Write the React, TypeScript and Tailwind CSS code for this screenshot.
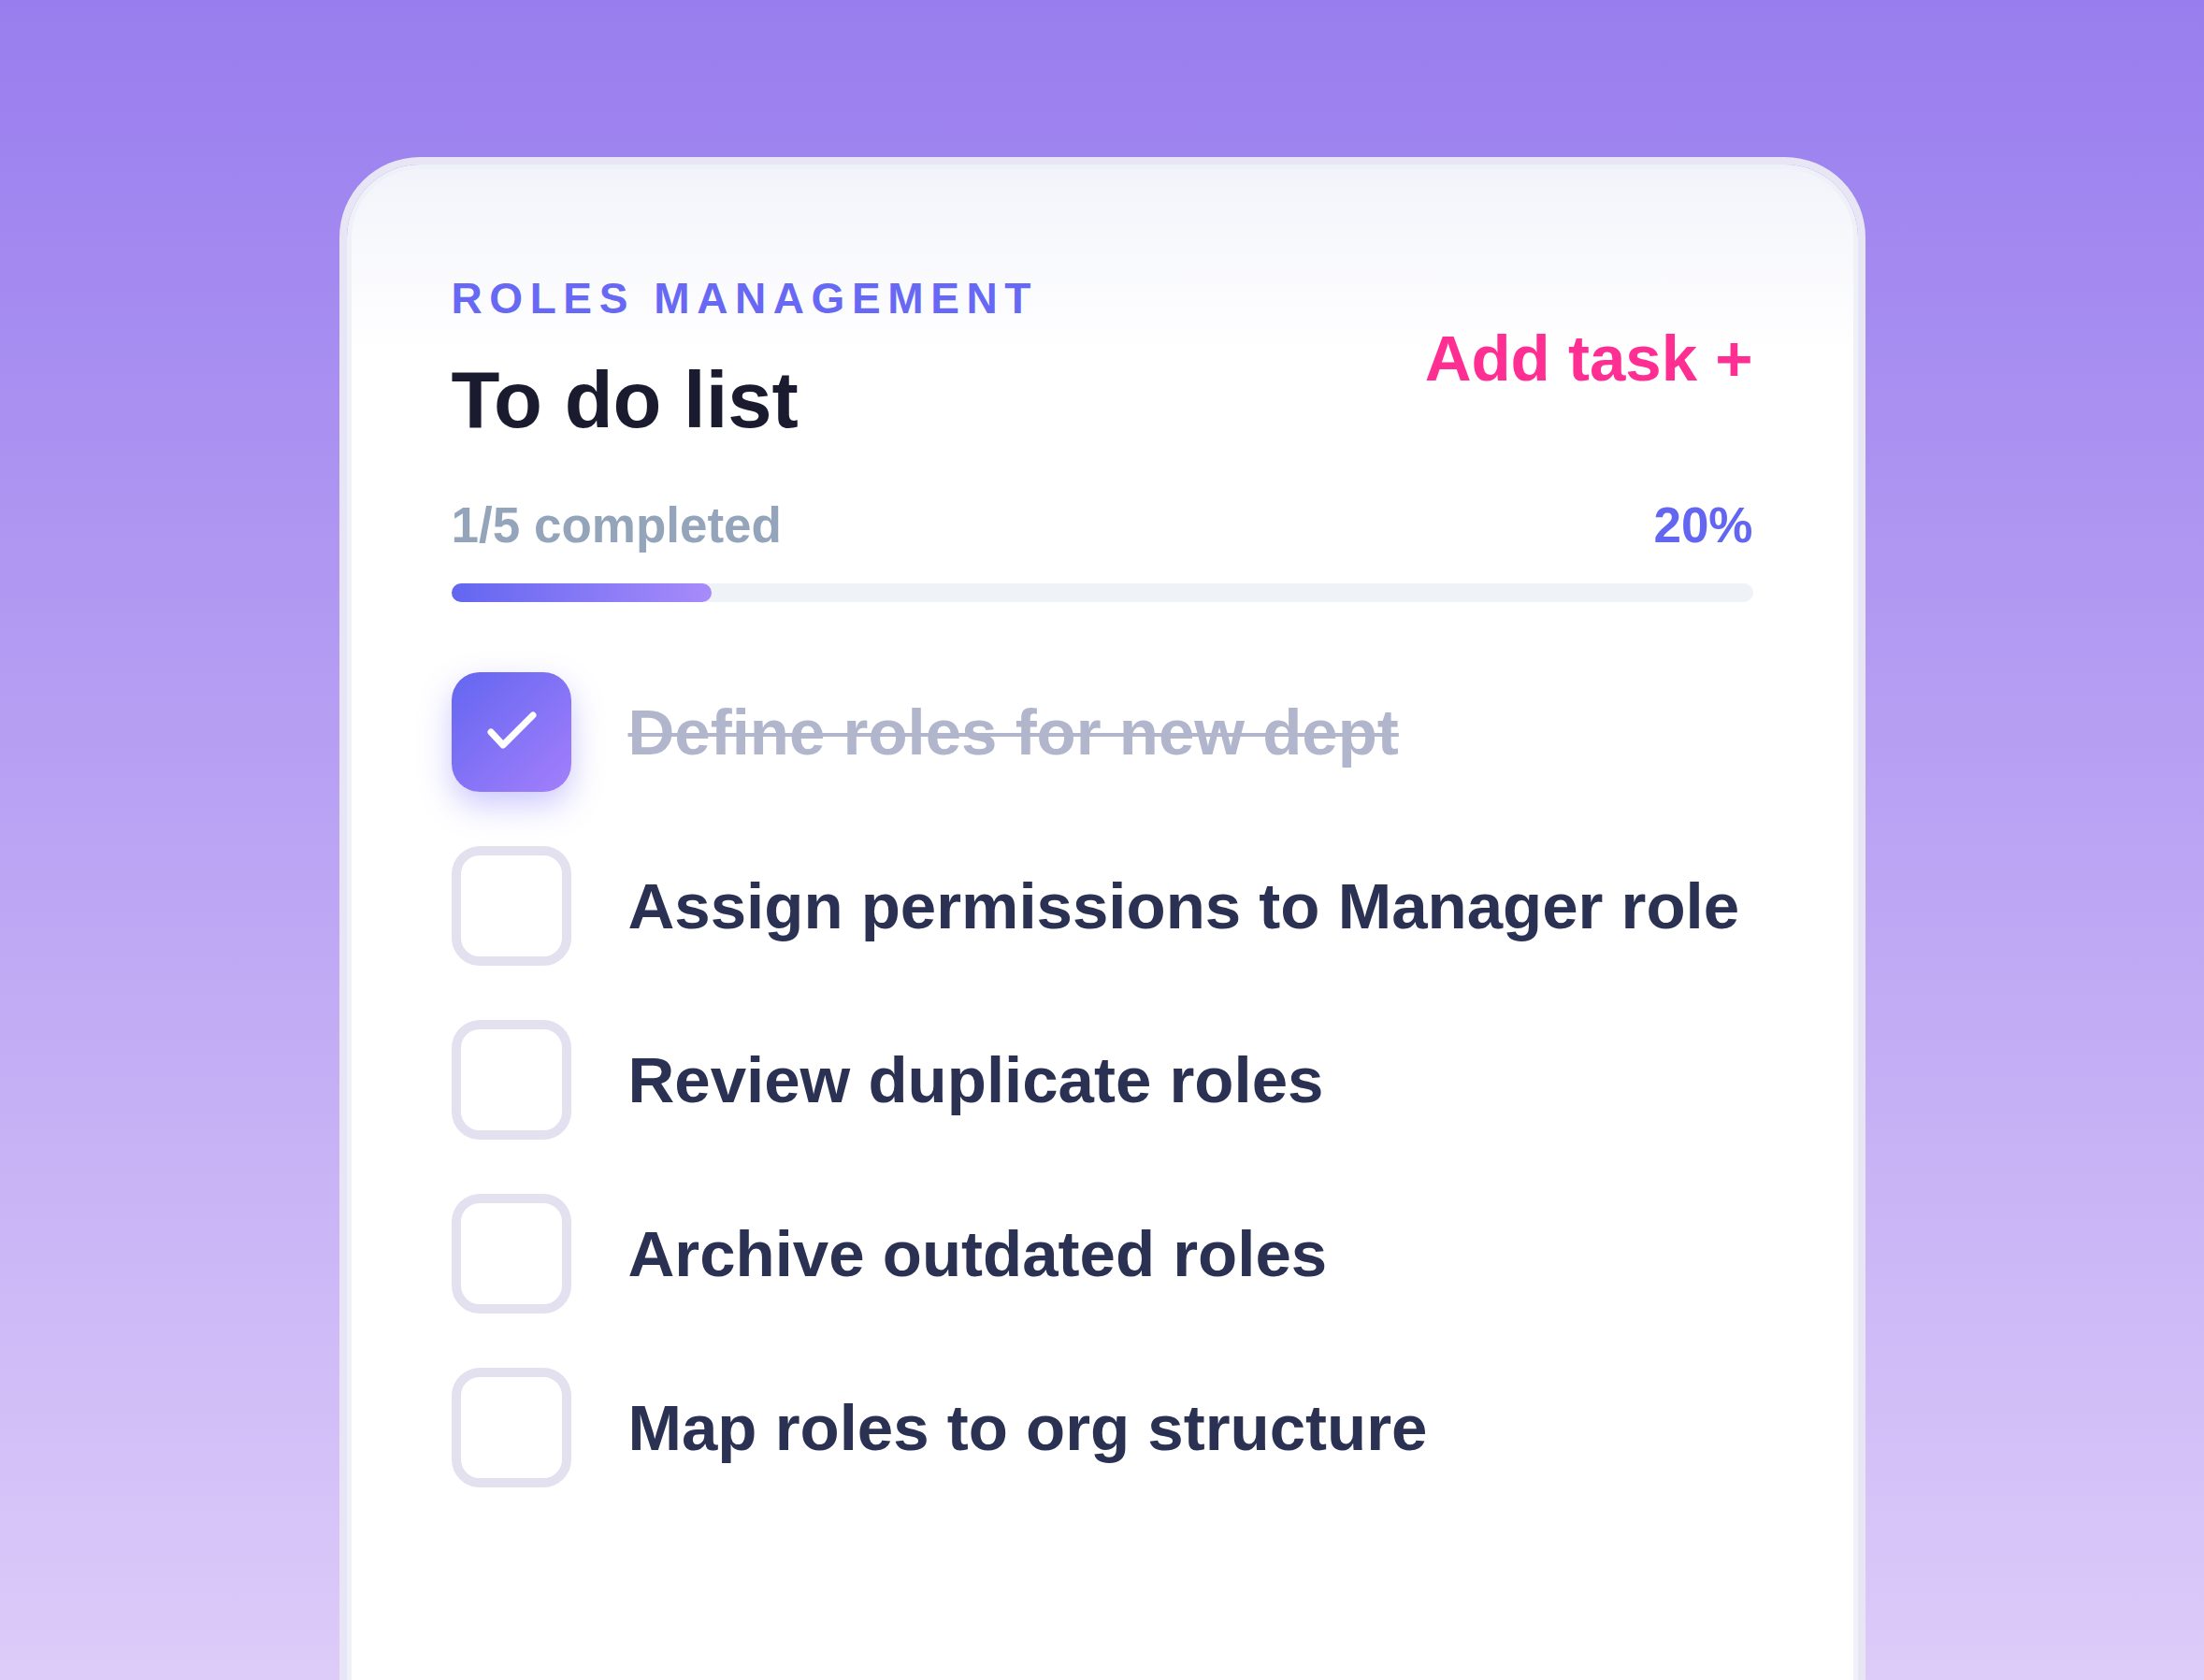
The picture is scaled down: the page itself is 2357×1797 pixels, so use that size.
import React from "react";

const tasks = [
  { label: "Define roles for new dept", done: true },
  { label: "Assign permissions to Manager role", done: false },
  { label: "Review duplicate roles", done: false },
  { label: "Archive outdated roles", done: false },
  { label: "Map roles to org structure", done: false },
];

function CheckBox({ done }: { done: boolean }) {
  if (done) {
    return (
      <div className="flex h-[128px] w-[128px] shrink-0 items-center justify-center rounded-[30px] bg-[linear-gradient(135deg,#6366f1_0%,#a47ffb_100%)] shadow-[0_14px_34px_rgba(110,100,245,0.35)]">
        <svg width="128" height="128" viewBox="0 0 128 128" fill="none">
          <path d="M42 64 L55 78 L87 46" stroke="white" strokeWidth="7" strokeLinecap="round" strokeLinejoin="round" />
        </svg>
      </div>
    );
  }
  return <div className="h-[128px] w-[128px] shrink-0 rounded-[30px] border-[10px] border-[#e3e1f0] bg-white" />;
}

export default function App() {
  return (
    <div
      className="flex h-[1797px] w-full justify-center overflow-hidden bg-[linear-gradient(to_bottom,#987dee,#ddcbf9)] pt-[168px]"
      style={{ fontFamily: '"Liberation Sans", Arial, sans-serif' }}
    >
      <div className="h-[1700px] w-[1632px] shrink-0 rounded-t-[86px] border-[8px] border-b-0 border-[#e8e6f5]">
        <div className="h-full rounded-t-[78px] border-[5px] border-b-0 border-[#eef1f7] bg-[linear-gradient(to_bottom,#f3f4fb,#ffffff_200px)] px-[107px] pt-[115px]">
          <div className="flex items-start justify-between">
            <div className="flex flex-col">
              <div className="text-[46px] font-bold uppercase leading-[46px] tracking-[0.165em] text-[#6769f4]">
                Roles Management
              </div>
              <div className="mt-[43px] text-[85px] font-bold leading-[85px] text-[#1a1b2e]">
                To do list
              </div>
            </div>
            <div className="mt-[53px] text-[69px] font-bold leading-[69px] text-[#ff2e93]">Add task +</div>
          </div>

          <div className="mt-[65px] flex items-start justify-between">
            <div className="text-[53px] font-bold leading-[53px] text-[#94a5bb]">1/5 completed</div>
            <div className="text-[53px] font-bold leading-[53px] text-[#6366f1]">20%</div>
          </div>

          <div className="mt-[36px] h-[20px] w-full rounded-full bg-[#eff2f7]">
            <div className="h-full w-[20%] rounded-full bg-[linear-gradient(to_right,#6366f1,#a78bfa)]" />
          </div>

          <div className="mt-[75px] flex flex-col gap-[58px]">
            {tasks.map((t) => (
              <div key={t.label} className="flex items-center gap-[61px]">
                <CheckBox done={t.done} />
                <div
                  className={
                    t.done
                      ? "text-[69px] font-bold leading-[69px] text-[#b1b6cc] line-through decoration-[#b1b6cc] decoration-[4px]"
                      : "text-[69px] font-bold leading-[69px] text-[#2a3152]"
                  }
                >
                  {t.label}
                </div>
              </div>
            ))}
          </div>
        </div>
      </div>
    </div>
  );
}
